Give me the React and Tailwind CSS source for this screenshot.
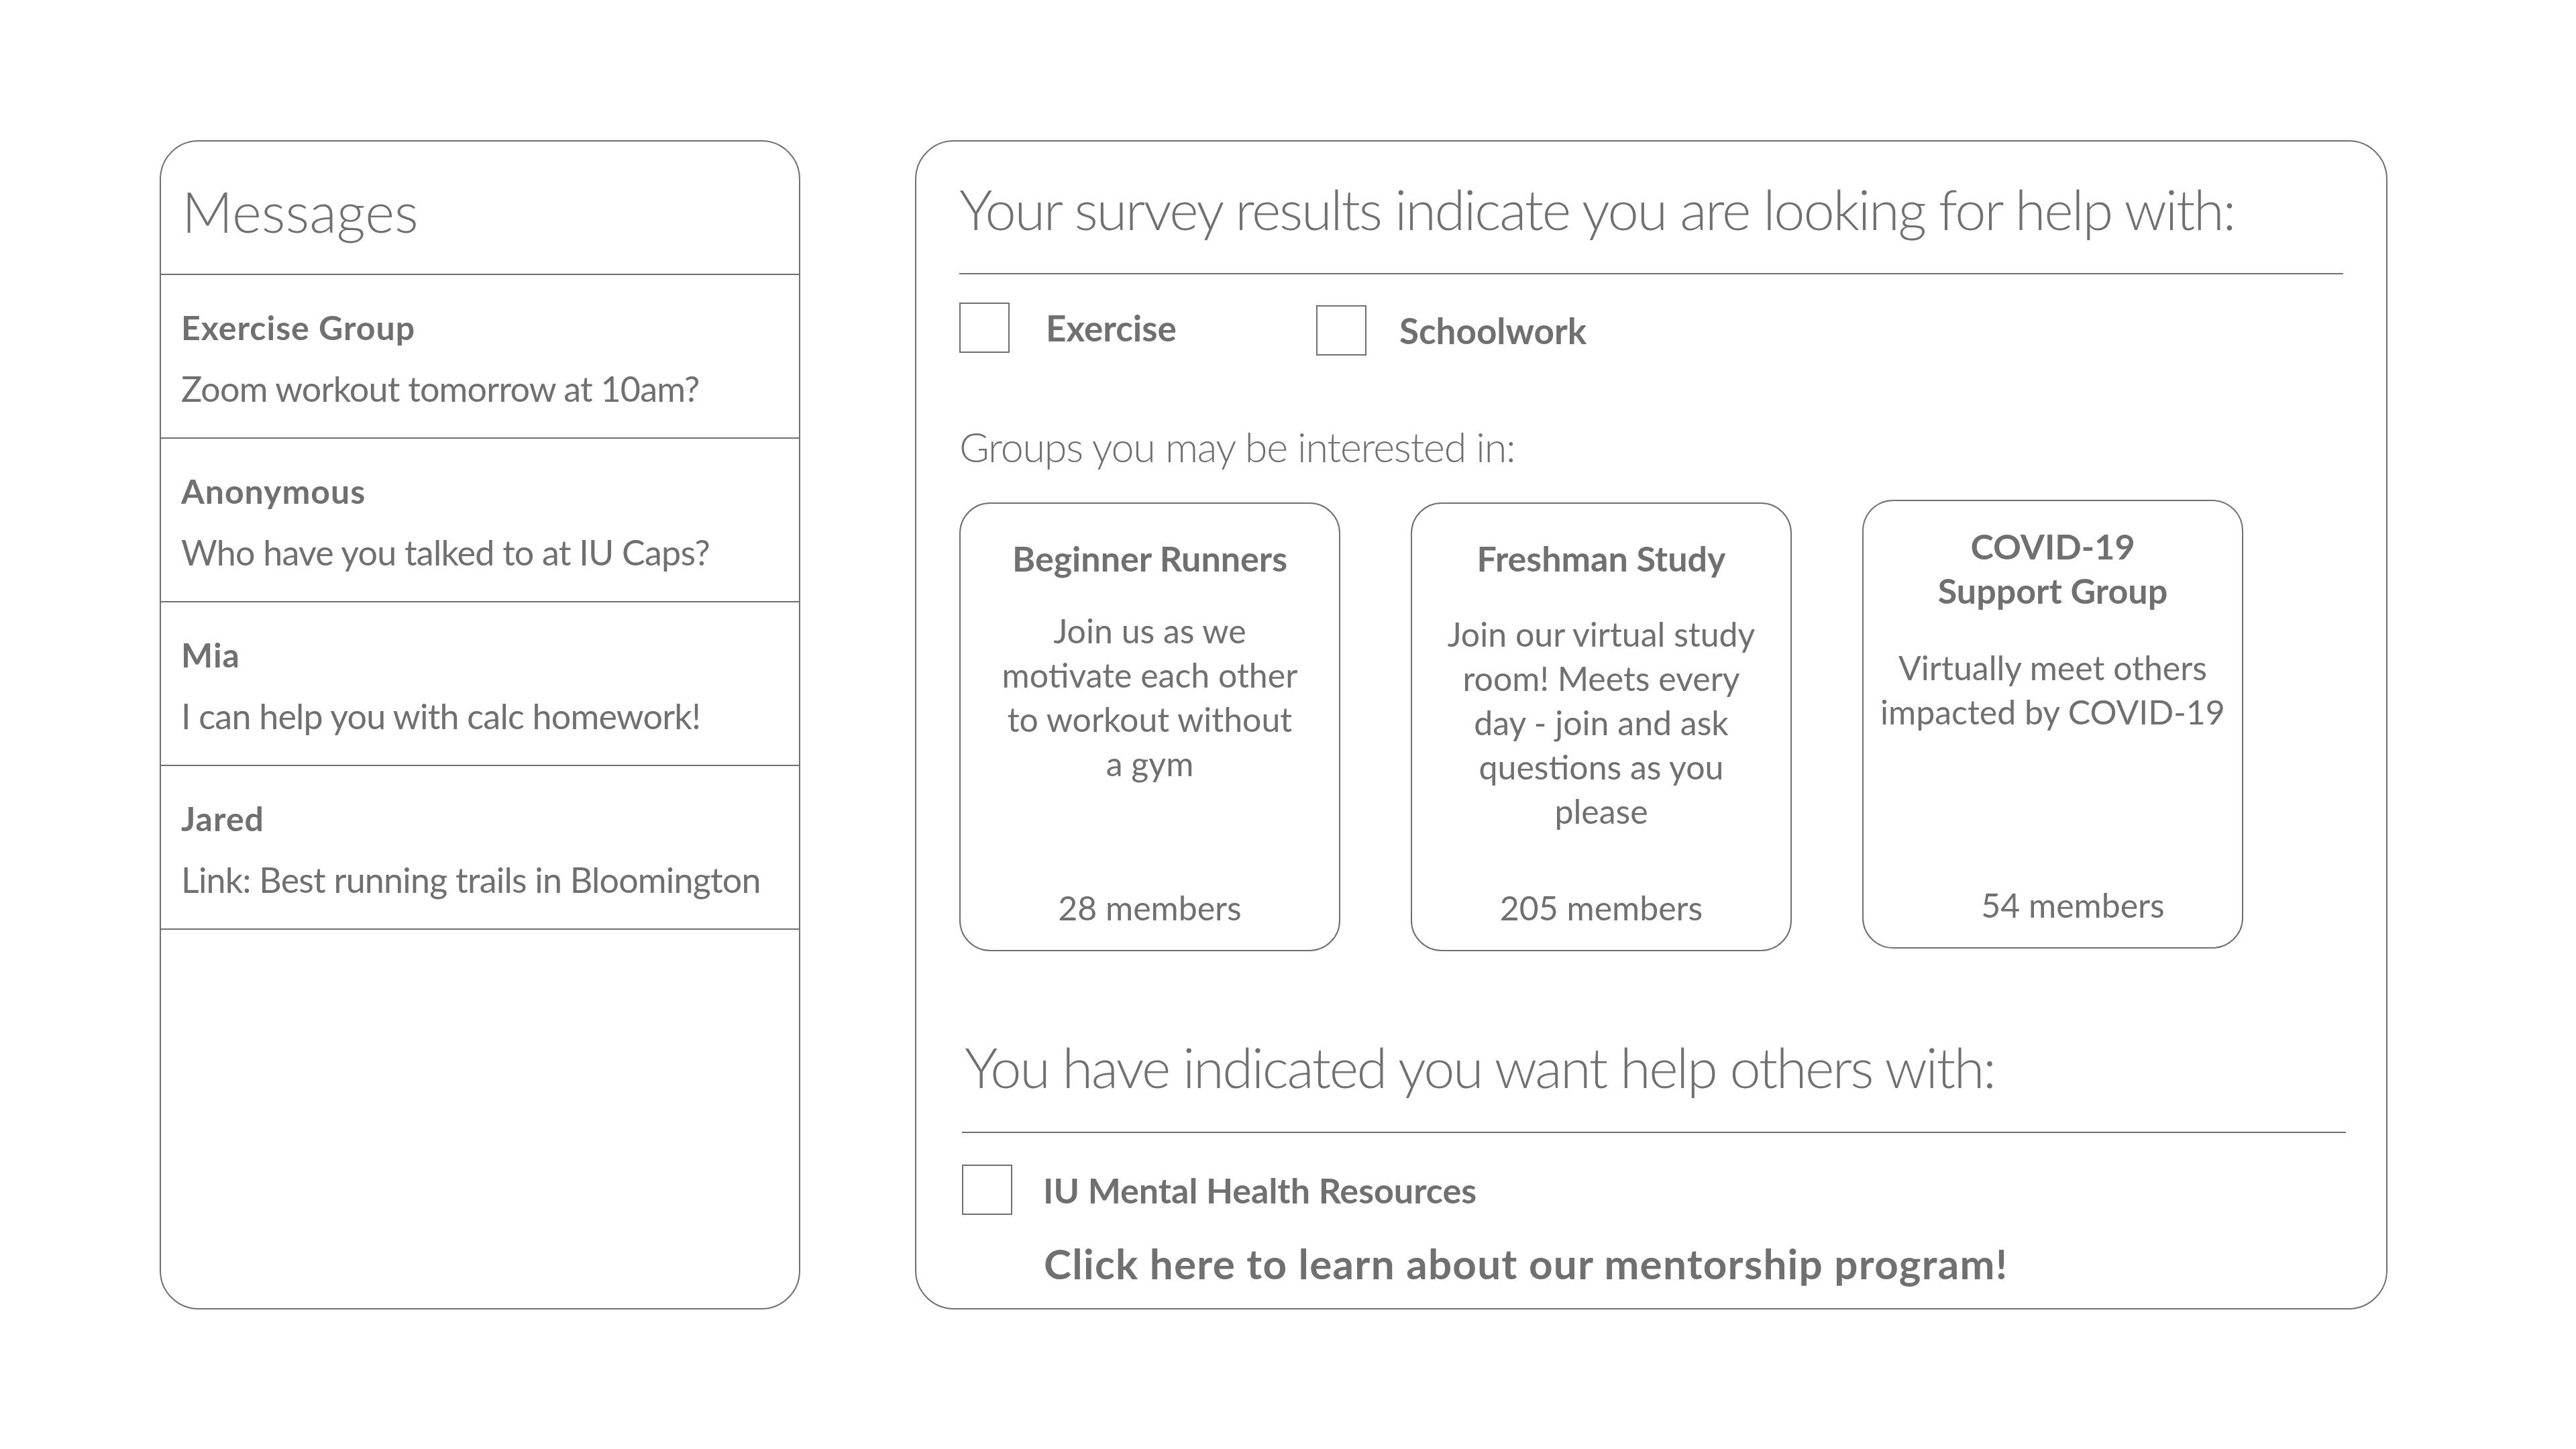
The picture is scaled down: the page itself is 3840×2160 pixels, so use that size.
export default function App() {
  return (
    <div className="min-h-screen w-full bg-white font-['Lato','Open_Sans',sans-serif] text-[#707070]">
      <div className="flex items-start pt-[209px] pl-[238px] gap-[171px]">
        <LeftPanel />
        <RightPanel />
      </div>
    </div>
  );
}

const messages = [
  { name: "Exercise Group", text: "Zoom workout tomorrow at 10am?" },
  { name: "Anonymous", text: "Who have you talked to at IU Caps?" },
  { name: "Mia", text: "I can help you with calc homework!" },
  { name: "Jared", text: "Link: Best running trails in Bloomington" },
];

function LeftPanel() {
  return (
    <div className="w-[955px] h-[1743px] border-2 border-[#707070] rounded-[58px] flex flex-col overflow-hidden">
      <div className="h-[199px] shrink-0 border-b-2 border-[#707070] pl-[31px] pt-[62px]">
        <div className="text-[84px] font-light leading-none">Messages</div>
      </div>
      {messages.map((m) => (
        <div key={m.name} className="h-[244px] shrink-0 border-b-2 border-[#707070] pl-[30px] pt-[53px]">
          <div className="text-[50px] font-bold leading-none tracking-[0.02em] whitespace-nowrap">{m.name}</div>
          <div className="mt-[40px] text-[52px] leading-none tracking-[-0.015em] whitespace-nowrap">{m.text}</div>
        </div>
      ))}
    </div>
  );
}

function Box() {
  return <div className="w-[75px] h-[75px] shrink-0 border-2 border-[#707070]" />;
}

function Card({ title, lines, members, top = "pt-[48px]", descGap = "mt-[45px]", membersShift = "" }) {
  return (
    <div className={"w-[568px] h-[669px] shrink-0 border-2 border-[#707070] rounded-[46px] flex flex-col items-center text-center pb-[30px] " + top}>
      <div className="text-[52px] font-bold leading-[66px] whitespace-nowrap">
        {title.map((t) => (
          <div key={t}>{t}</div>
        ))}
      </div>
      <div className={"text-[50px] font-normal leading-[66px] whitespace-nowrap " + descGap}>
        {lines.map((l) => (
          <div key={l}>{l}</div>
        ))}
      </div>
      <div className={"mt-auto text-[50px] leading-[66px] whitespace-nowrap " + membersShift}>{members}</div>
    </div>
  );
}

function RightPanel() {
  return (
    <div className="w-[2195px] h-[1743px] border-2 border-[#707070] rounded-[58px] px-[64px] flex flex-col">
      <div className="pt-[59px] pb-[54px] border-b-2 border-[#707070]">
        <div className="text-[83px] font-light leading-none tracking-[-0.027em] whitespace-nowrap">
          Your survey results indicate you are looking for help with:
        </div>
      </div>

      <div className="mt-[42px] flex items-start">
        <div className="w-[532px] flex items-center gap-[54px]">
          <Box />
          <span className="text-[53px] font-bold leading-none">Exercise</span>
        </div>
        <div className="mt-[4px] flex items-center gap-[49px]">
          <Box />
          <span className="text-[53px] font-bold leading-none">Schoolwork</span>
        </div>
      </div>

      <div className="mt-[105px] text-[61px] font-light leading-none tracking-[-0.02em] whitespace-nowrap">
        Groups you may be interested in:
      </div>

      <div className="mt-[49px] flex items-start gap-[105px]">
        <div className="mt-[4px]">
          <Card
            title={["Beginner Runners"]}
            lines={["Join us as we", "motivate each other", "to workout without", "a gym"]}
            members="28 members"
            descGap="mt-[42px]"
          />
        </div>
        <div className="mt-[4px]">
          <Card
            title={["Freshman Study"]}
            lines={["Join our virtual study", "room! Meets every", "day - join and ask", "questions as you", "please"]}
            members="205 members"
            descGap="mt-[47px]"
          />
        </div>
        <Card
          title={["COVID-19", "Support Group"]}
          lines={["Virtually meet others", "impacted by COVID-19"]}
          members="54 members"
          top="pt-[34px]"
          descGap="mt-[49px]"
          membersShift="ml-[60px]"
        />
      </div>

      <div className="mt-[131px] ml-[4px] -mr-[4px] pb-[55px] border-b-2 border-[#707070]">
        <div className="pl-[4px] text-[83px] font-light leading-none tracking-[-0.029em] whitespace-nowrap">
          You have indicated you want help others with:
        </div>
      </div>

      <div className="mt-[47px] ml-[4px] flex items-center gap-[46px]">
        <Box />
        <span className="text-[52px] font-bold leading-none whitespace-nowrap">IU Mental Health Resources</span>
      </div>

      <div className="mt-[41px] pl-[126px] text-[62px] font-bold leading-none tracking-[0.02em] whitespace-nowrap">
        Click here to learn about our mentorship program!
      </div>
    </div>
  );
}
